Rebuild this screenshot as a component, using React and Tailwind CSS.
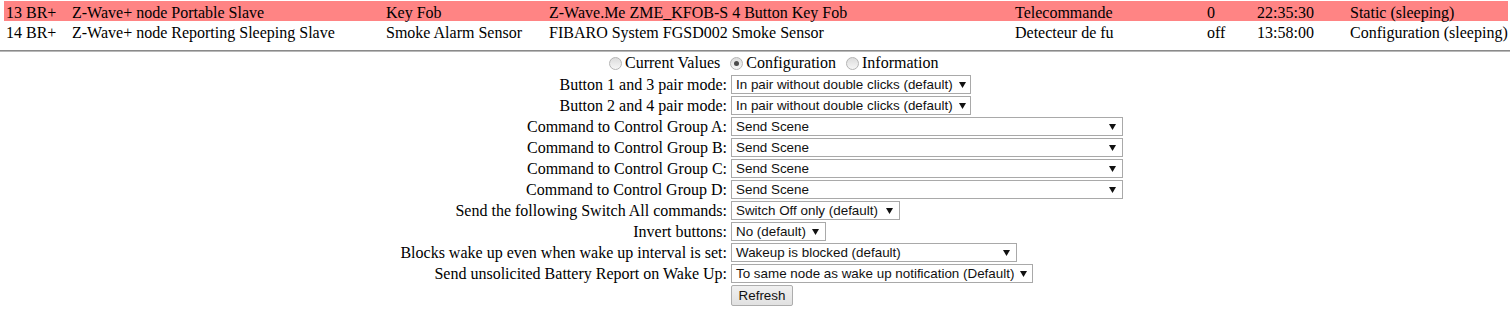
import React from "react"

const nodes = [
  {
    id: "13 BR+",
    type: "Z-Wave+ node Portable Slave",
    kind: "Key Fob",
    product: "Z-Wave.Me ZME_KFOB-S 4 Button Key Fob",
    name: "Telecommande",
    value: "0",
    time: "22:35:30",
    state: "Static (sleeping)",
    selected: true,
  },
  {
    id: "14 BR+",
    type: "Z-Wave+ node Reporting Sleeping Slave",
    kind: "Smoke Alarm Sensor",
    product: "FIBARO System FGSD002 Smoke Sensor",
    name: "Detecteur de fu",
    value: "off",
    time: "13:58:00",
    state: "Configuration (sleeping)",
  },
]

const params = [
  { label: "Button 1 and 3 pair mode:", value: "In pair without double clicks (default)", width: "w-[240px]" },
  { label: "Button 2 and 4 pair mode:", value: "In pair without double clicks (default)", width: "w-[240px]" },
  { label: "Command to Control Group A:", value: "Send Scene", width: "w-[392px]" },
  { label: "Command to Control Group B:", value: "Send Scene", width: "w-[392px]" },
  { label: "Command to Control Group C:", value: "Send Scene", width: "w-[392px]" },
  { label: "Command to Control Group D:", value: "Send Scene", width: "w-[392px]" },
  { label: "Send the following Switch All commands:", value: "Switch Off only (default)", width: "w-[169px]" },
  { label: "Invert buttons:", value: "No (default)", width: "w-[95px]" },
  { label: "Blocks wake up even when wake up interval is set:", value: "Wakeup is blocked (default)", width: "w-[286px]" },
  { label: "Send unsolicited Battery Report on Wake Up:", value: "To same node as wake up notification (Default)", width: "w-[302px]" },
]

function Radio({ checked, label }) {
  return (
    <div className="flex items-center">
      <span className="flex h-[13px] w-[13px] items-center justify-center rounded-full border border-[#b4b4b4] bg-gradient-to-b from-[#dcdcdc] to-[#f6f6f6]">
        {checked && <span className="h-[5px] w-[5px] rounded-full bg-[#4a4a4a]" />}
      </span>
      <span className="ml-[3px]">{label}</span>
    </div>
  )
}

function FakeSelect({ value, width }) {
  return (
    <div
      className={`flex h-[19px] ${width} items-center justify-between border border-[#a9a9a9] bg-white pl-[4px] pr-[6px] text-[13.4px] text-[#111] [font-family:'Liberation_Sans',Arial,sans-serif]`}
    >
      <span className="whitespace-nowrap leading-none">{value}</span>
      <svg width="7" height="6" viewBox="0 0 7 6" className="ml-[6px] shrink-0">
        <path d="M0 0 H7 L3.5 6 Z" fill="#111" />
      </svg>
    </div>
  )
}

export default function App() {
  return (
    <div className="min-h-[314px] bg-white text-[16px] text-black [font-family:'Liberation_Serif','Times_New_Roman',serif]">
      <div className="pt-[1px]">
        {nodes.map((n) => (
          <div
            key={n.id}
            className={`mx-[4px] grid h-[20px] grid-cols-[66px_314px_163px_466px_192px_50px_93px_1fr] items-center whitespace-nowrap pl-[2px] ${
              n.selected ? "bg-[#ff8484]" : ""
            }`}
          >
            <span>{n.id}</span>
            <span>{n.type}</span>
            <span>{n.kind}</span>
            <span>{n.product}</span>
            <span>{n.name}</span>
            <span>{n.value}</span>
            <span>{n.time}</span>
            <span>{n.state}</span>
          </div>
        ))}
      </div>

      <div className="mr-[2px] mt-[9px] h-[2px] border-t border-b border-t-[#8a8a8a] border-b-[#b8b8b8]" />

      <div className="flex flex-col">
        <div className="flex h-[22px] items-center gap-[10px] pl-[609px]">
          <Radio label="Current Values" />
          <Radio checked label="Configuration" />
          <Radio label="Information" />
        </div>

        {params.map((p, i) => (
          <div key={i} className="flex h-[21px] items-center">
            <div className="w-[727px] whitespace-nowrap text-right">{p.label}</div>
            <div className="ml-[4px]">
              <FakeSelect value={p.value} width={p.width} />
            </div>
          </div>
        ))}

        <div className="flex h-[22px] items-center pl-[731px]">
          <button className="h-[21px] w-[62px] rounded-[2px] border border-[#adadad] bg-gradient-to-b from-[#f0f0f0] to-[#e1e1e1] text-[13.4px] text-[#111] [font-family:'Liberation_Sans',Arial,sans-serif]">
            Refresh
          </button>
        </div>
      </div>
    </div>
  )
}
